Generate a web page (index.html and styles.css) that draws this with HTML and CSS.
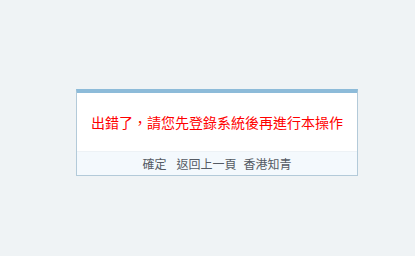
FILE: index.html
```html
<!DOCTYPE html>
<html lang="zh-Hant">
<head>
<meta charset="utf-8">
<title>提示信息</title>
<link rel="stylesheet" href="styles.css">
</head>
<body>
<div class="page">
  <div class="dialog">
    <div class="message">出錯了，請您先登錄系統後再進行本操作</div>
    <div class="actions">
      <a class="link" href="#">確定</a>
      <a class="link gap-wide" href="#">返回上一頁</a>
      <a class="link gap-narrow" href="#">香港知青</a>
    </div>
  </div>
</div>
</body>
</html>
```

FILE: styles.css
```css
html, body {
  margin: 0;
  padding: 0;
  background: #eff3f5;
  font-family: "Noto Sans CJK TC", "Noto Sans CJK SC", "Liberation Sans", sans-serif;
}

.page {
  padding: 89px 0 0 76px;
}

.dialog {
  width: 280px;
  border: 1px solid #b3cad9;
  border-top: 4px solid #8dbbd9;
  background: #ffffff;
}

.message {
  height: 58px;
  display: flex;
  align-items: center;
  justify-content: center;
  color: #ff0000;
  font-size: 14px;
  line-height: 16px;
}

.actions {
  height: 23px;
  border-top: 1px solid #edf2f6;
  background: #f4f9fd;
  display: flex;
  justify-content: center;
  align-items: center;
  font-size: 12px;
  line-height: 14px;
}

.link {
  color: #555b64;
  text-decoration: none;
}

.gap-wide {
  margin-left: 10px;
}

.gap-narrow {
  margin-left: 7px;
}
```
